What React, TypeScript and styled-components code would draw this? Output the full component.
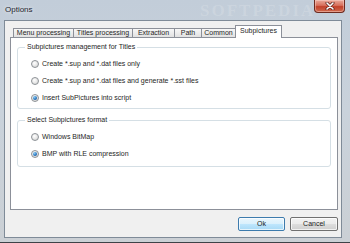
import React from "react";
import styled, { createGlobalStyle } from "styled-components";

const GlobalStyle = createGlobalStyle`
    html, body {
        margin: 0;
        padding: 0;
        overflow: hidden;
    }
    body {
        font-family: "Liberation Sans", Arial, sans-serif;
        color: #262626;
    }
`;

const Window = styled.div`
    width: 350px;
    height: 243px;
    box-sizing: border-box;
    display: flex;
    flex-direction: column;
    background: linear-gradient(180deg, #c2cdd9 0%, #c9d2db 45%, #cbd0d5 100%);
    border-bottom: 1px solid #3d4247;
`;

const TitleBar = styled.div`
    height: 20px;
    flex: none;
    display: flex;
    align-items: flex-start;
    padding: 0 5px;
    position: relative;
`;

const Title = styled.div`
    font-size: 8px;
    line-height: 20px;
    color: #1e2630;
    text-shadow: 0 0 4px rgba(255, 255, 255, 0.9);
`;

const Watermark = styled.div`
    position: absolute;
    left: 200px;
    top: 1px;
    font-family: "Liberation Serif", serif;
    font-size: 17px;
    letter-spacing: 2px;
    font-weight: bold;
    color: rgba(255, 255, 255, 0.16);
    pointer-events: none;
`;

const CloseButton = styled.div`
    margin-left: auto;
    width: 31px;
    height: 13px;
    box-sizing: border-box;
    border: 1px solid #6d2a1f;
    border-top: none;
    border-radius: 0 0 4px 4px;
    background: linear-gradient(180deg, #e9a99a 0%, #d7705c 45%, #c2412a 55%, #cf6a4f 100%);
    box-shadow: inset 0 0 0 1px rgba(255, 220, 210, 0.45);
    display: flex;
    align-items: center;
    justify-content: center;
    position: relative;
    z-index: 1;
`;

const Client = styled.div`
    flex: 1;
    margin: 0 8px 4px 4px;
    border: 1px solid #7f8b98;
    background: #f0f0f0;
    padding: 4px 3px 6px 5px;
    display: flex;
    flex-direction: column;
`;

const TabStrip = styled.div`
    height: 12px;
    flex: none;
    display: flex;
    align-items: flex-end;
    padding-left: 3px;
`;

const Tab = styled.div<{ $w: number; $active?: boolean }>`
    width: ${(p) => p.$w}px;
    height: ${(p) => (p.$active ? 13 : 9)}px;
    margin-bottom: ${(p) => (p.$active ? -1 : 0)}px;
    box-sizing: border-box;
    border: 1px solid #8c9099;
    border-bottom: none;
    margin-left: -1px;
    position: relative;
    z-index: ${(p) => (p.$active ? 1 : 0)};
    background: ${(p) =>
        p.$active ? "#ffffff" : "linear-gradient(180deg, #f7f7f7 0%, #ececec 50%, #e1e1e1 100%)"};
    font-size: 7px;
    line-height: ${(p) => (p.$active ? 10 : 8)}px;
    text-align: center;
    white-space: nowrap;
    &:first-child {
        margin-left: 0;
    }
`;

const Panel = styled.div`
    height: 173px;
    flex: none;
    box-sizing: border-box;
    border: 1px solid #8c9099;
    background: #ffffff;
    padding: 5px 6px 0 6px;
    display: flex;
    flex-direction: column;
`;

const Group = styled.fieldset<{ $gap?: number }>`
    margin: ${(p) => p.$gap ?? 0}px 0 0 0;
    padding: 4px 0 ${(p) => (p.$gap ? 4 : 2)}px 13px;
    border: 1px solid #d5dfe5;
    border-radius: 3px;
    min-inline-size: 0;
`;

const Legend = styled.legend`
    font-size: 7px;
    line-height: 8px;
    padding: 0 2px;
    margin-left: -6px;
`;

const RadioRow = styled.label`
    height: 17px;
    display: flex;
    align-items: center;
    gap: 3px;
    font-size: 7px;
`;

const RadioDot = styled.span<{ $checked?: boolean }>`
    width: 8px;
    height: 8px;
    box-sizing: border-box;
    border-radius: 50%;
    border: 1px solid #8d9296;
    background: radial-gradient(circle at 40% 35%, #ffffff 0%, #e6e6e6 55%, #cfcfcf 100%);
    display: flex;
    align-items: center;
    justify-content: center;
    &::after {
        content: "";
        display: ${(p) => (p.$checked ? "block" : "none")};
        width: 4px;
        height: 4px;
        border-radius: 50%;
        background: radial-gradient(circle at 35% 30%, #8fd0f5 0%, #2a79c4 55%, #143e74 100%);
    }
`;

const ButtonRow = styled.div`
    margin-top: 7px;
    height: 14px;
    display: flex;
    justify-content: flex-end;
    gap: 5px;
`;

const Button = styled.div<{ $w: number; $default?: boolean }>`
    width: ${(p) => p.$w}px;
    height: 14px;
    box-sizing: border-box;
    border: 1px solid ${(p) => (p.$default ? "#3d7bad" : "#707070")};
    border-radius: 2px;
    background: ${(p) =>
        p.$default
            ? "linear-gradient(180deg, #eaf6fd 0%, #d9f0fc 50%, #bee6fd 51%, #a7d9f5 100%)"
            : "linear-gradient(180deg, #f2f2f2 0%, #ebebeb 50%, #dddddd 51%, #cfcfcf 100%)"};
    box-shadow: inset 0 0 0 1px rgba(255, 255, 255, 0.7);
    font-size: 7px;
    line-height: 12px;
    text-align: center;
    color: #1c1c1c;
`;

const tabs = [
    { label: "Menu processing", w: 61 },
    { label: "Titles processing", w: 60 },
    { label: "Extraction", w: 43 },
    { label: "Path", w: 28 },
    { label: "Common", w: 35 },
    { label: "Subpictures", w: 47, active: true },
];

const Radio = ({ label, checked }: { label: string; checked?: boolean }) => (
    <RadioRow>
        <RadioDot $checked={checked} />
        <span>{label}</span>
    </RadioRow>
);

const App = () => {
    return (
        <>
            <GlobalStyle />
            <Window>
                <TitleBar>
                    <Watermark>SOFTPEDIA</Watermark>
                    <Title>Options</Title>
                    <CloseButton>
                        <svg width="10" height="8" viewBox="0 0 10 8">
                            <path d="M2 1 L8 7 M8 1 L2 7" stroke="#5a2018" strokeWidth="3" strokeLinecap="round" />
                            <path d="M2 1 L8 7 M8 1 L2 7" stroke="#ffffff" strokeWidth="1.6" strokeLinecap="round" />
                        </svg>
                    </CloseButton>
                </TitleBar>
                <Client>
                    <TabStrip>
                        {tabs.map((t) => (
                            <Tab key={t.label} $w={t.w} $active={t.active}>
                                {t.label}
                            </Tab>
                        ))}
                    </TabStrip>
                    <Panel>
                        <Group>
                            <Legend>Subpictures management for Titles</Legend>
                            <Radio label="Create *.sup and *.dat files only" />
                            <Radio label="Create *.sup and *.dat files and generate *.sst files" />
                            <Radio label="Insert SubPictures into script" checked />
                        </Group>
                        <Group $gap={7}>
                            <Legend>Select Subpictures format</Legend>
                            <Radio label="Windows BitMap" />
                            <Radio label="BMP with RLE compression" checked />
                        </Group>
                    </Panel>
                    <ButtonRow>
                        <Button $w={47} $default>
                            Ok
                        </Button>
                        <Button $w={48}>Cancel</Button>
                    </ButtonRow>
                </Client>
            </Window>
        </>
    );
};

export default App;
